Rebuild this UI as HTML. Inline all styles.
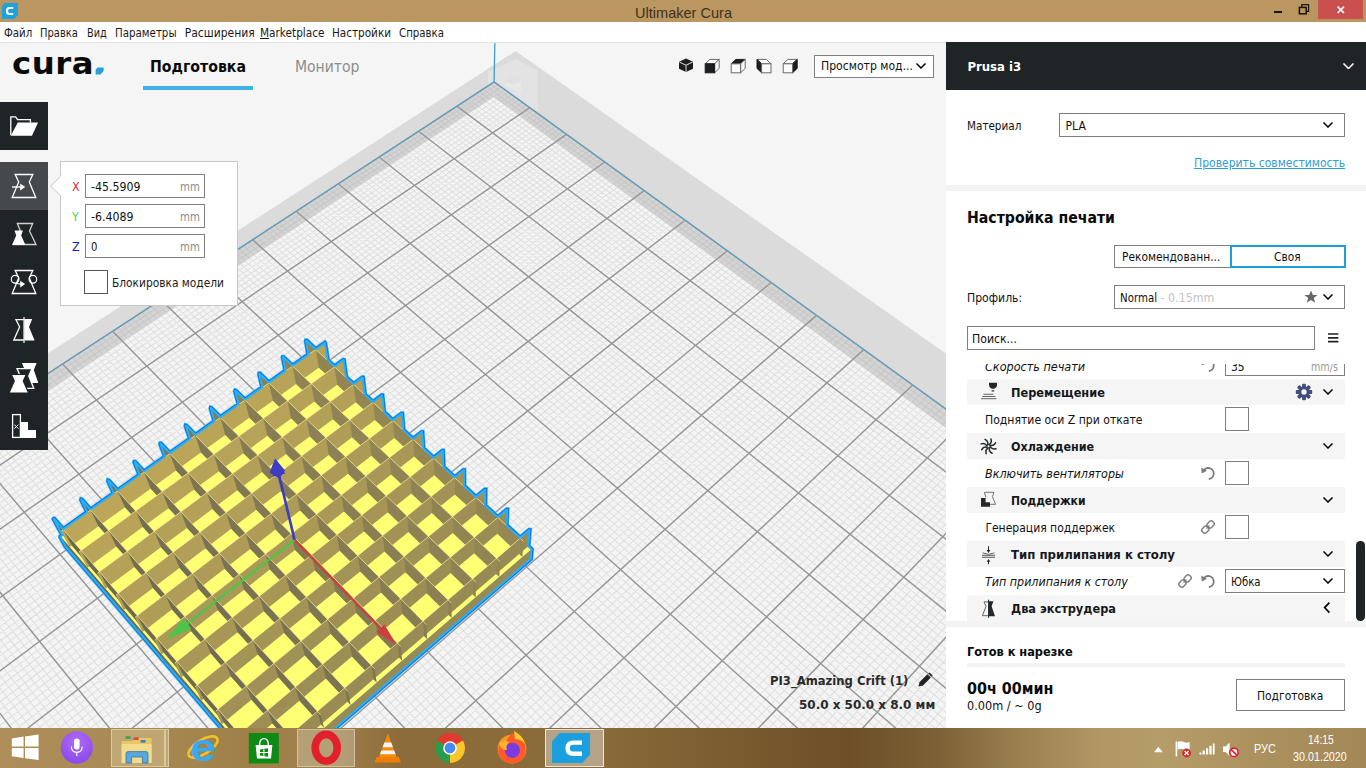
<!DOCTYPE html>
<html lang="ru"><head><meta charset="utf-8"><title>Ultimaker Cura</title>
<style>
html,body{margin:0;padding:0;width:1366px;height:768px;overflow:hidden;background:#f5f5f5;}
body{position:relative;font-family:'DejaVu Sans Condensed','Liberation Sans',sans-serif;}
.scene{position:absolute;left:0;top:0;}
.b{position:absolute;display:block;}
.t{position:absolute;white-space:pre;transform-origin:0 50%;display:block;}

</style></head>
<body>
<svg class="scene" width="1366" height="768" viewBox="0 0 1366 768">
<rect x="0" y="42" width="1366" height="686" fill="#f5f5f5"/>
<polygon points="515.6,51 1605.2,817 408.8,2960 -613.5,781" fill="#dbdbdb"/>
<path d="M488 86V71.5L516 59L537.8 71V112L494.6 82.6Z" fill="#fff" fill-opacity="0.22"/><path d="M505.4 80a7.8 3.6 0 0 1 15.6 0V92L505.4 86Z" fill="#fff" fill-opacity="0.2"/><ellipse cx="513.2" cy="80" rx="7.8" ry="3.6" fill="#d8d8d8" fill-opacity="0.5"/>
<polygon points="494.1,81.9 1530.9,832.7 415.5,2734.5 -558.5,769.9" fill="#f4f4f4"/>
<path d="M497.6 84.5L-555.9 775.1M490.4 84.3L1527.9 837.9M501.1 87L-553.3 780.4M486.7 86.7L1524.8 843.2M504.7 89.6L-550.6 785.8M483.1 89.1L1521.7 848.5M508.2 92.1L-548 791.1M479.4 91.5L1518.6 853.8M511.8 94.7L-545.3 796.5M475.7 94L1515.5 859.1M515.3 97.3L-542.6 801.9M471.9 96.4L1512.3 864.5M518.9 99.9L-539.9 807.3M468.2 98.8L1509.2 869.8M522.5 102.5L-537.2 812.7M464.5 101.3L1506 875.2M526.1 105.1L-534.5 818.2M460.7 103.7L1502.8 880.7M533.4 110.4L-529.1 829.2M453.2 108.7L1496.4 891.6M537 113L-526.3 834.8M449.4 111.1L1493.2 897.1M540.7 115.7L-523.6 840.4M445.6 113.6L1489.9 902.6M544.4 118.3L-520.8 846M441.8 116.1L1486.7 908.2M548 121L-518 851.6M437.9 118.6L1483.4 913.8M551.7 123.7L-515.2 857.2M434.1 121.1L1480.1 919.4M555.4 126.3L-512.4 862.9M430.3 123.6L1476.8 925M559.2 129L-509.5 868.6M426.4 126.1L1473.5 930.7M562.9 131.7L-506.7 874.4M422.5 128.7L1470.1 936.4M570.4 137.2L-501 885.9M414.8 133.8L1463.4 947.8M574.1 139.9L-498.1 891.8M410.8 136.3L1460 953.6M577.9 142.6L-495.2 897.6M406.9 138.9L1456.6 959.4M581.7 145.4L-492.2 903.5M403 141.4L1453.2 965.2M585.5 148.1L-489.3 909.4M399 144L1449.8 971M589.3 150.9L-486.4 915.4M395.1 146.6L1446.4 976.9M593.2 153.7L-483.4 921.3M391.1 149.2L1442.9 982.8M597 156.5L-480.4 927.3M387.1 151.8L1439.4 988.8M600.9 159.2L-477.4 933.4M383.1 154.4L1435.9 994.7M608.6 164.9L-471.4 945.5M375.1 159.7L1428.9 1006.7M612.5 167.7L-468.4 951.6M371.1 162.3L1425.3 1012.8M616.4 170.5L-465.3 957.8M367 165L1421.7 1018.9M620.4 173.4L-462.3 964M363 167.6L1418.2 1025M624.3 176.2L-459.2 970.2M358.9 170.3L1414.6 1031.1M628.2 179.1L-456.1 976.4M354.8 172.9L1410.9 1037.3M632.2 181.9L-453 982.7M350.7 175.6L1407.3 1043.5M636.2 184.8L-449.9 989M346.6 178.3L1403.7 1049.7M640.2 187.7L-446.7 995.4M342.5 181L1400 1056M648.2 193.5L-440.4 1008.1M334.2 186.4L1392.6 1068.6M652.2 196.4L-437.2 1014.6M330 189.2L1388.9 1075M656.3 199.4L-434 1021M325.8 191.9L1385.1 1081.3M660.3 202.3L-430.8 1027.6M321.6 194.6L1381.3 1087.8M664.4 205.3L-427.5 1034.1M317.4 197.4L1377.6 1094.2M668.5 208.2L-424.3 1040.7M313.2 200.1L1373.8 1100.7M672.6 211.2L-421 1047.3M308.9 202.9L1369.9 1107.2M676.7 214.2L-417.7 1053.9M304.7 205.7L1366.1 1113.8M680.9 217.2L-414.4 1060.6M300.4 208.5L1362.2 1120.3M689.2 223.2L-407.7 1074.1M291.9 214.1L1354.4 1133.6M693.3 226.2L-404.3 1080.8M287.6 216.9L1350.5 1140.3M697.5 229.2L-401 1087.7M283.2 219.7L1346.6 1147M701.7 232.3L-397.6 1094.5M278.9 222.6L1342.6 1153.8M706 235.3L-394.1 1101.4M274.6 225.4L1338.6 1160.6M710.2 238.4L-390.7 1108.3M270.2 228.2L1334.6 1167.4M714.4 241.5L-387.2 1115.3M265.8 231.1L1330.6 1174.2M718.7 244.6L-383.8 1122.3M261.4 234L1326.6 1181.1M723 247.7L-380.3 1129.4M257 236.9L1322.5 1188.1M731.6 253.9L-373.2 1143.6M248.1 242.7L1314.3 1202M735.9 257L-369.7 1150.7M243.7 245.6L1310.2 1209.1M740.3 260.2L-366.1 1157.9M239.2 248.5L1306 1216.1M744.6 263.3L-362.5 1165.1M234.7 251.4L1301.9 1223.2M749 266.5L-358.9 1172.4M230.2 254.4L1297.7 1230.4M753.4 269.7L-355.3 1179.7M225.7 257.3L1293.5 1237.6M757.8 272.9L-351.7 1187.1M221.2 260.3L1289.2 1244.8M762.2 276.1L-348 1194.5M216.7 263.2L1285 1252.1M766.6 279.3L-344.3 1201.9M212.1 266.2L1280.7 1259.4M775.6 285.7L-336.9 1216.9M202.9 272.2L1272 1274.1M780.1 289L-333.1 1224.5M198.3 275.2L1267.7 1281.5M784.6 292.2L-329.4 1232.1M193.7 278.2L1263.3 1289M789.1 295.5L-325.6 1239.7M189.1 281.3L1258.9 1296.5M793.6 298.8L-321.8 1247.4M184.4 284.3L1254.5 1304M798.2 302.1L-317.9 1255.2M179.7 287.4L1250 1311.6M802.7 305.4L-314.1 1262.9M175 290.4L1245.6 1319.2M807.3 308.7L-310.2 1270.7M170.3 293.5L1241.1 1326.9M811.9 312.1L-306.3 1278.6M165.6 296.6L1236.6 1334.6M821.2 318.8L-298.4 1294.5M156.1 302.8L1227.4 1350.2M825.8 322.1L-294.5 1302.5M151.4 305.9L1222.8 1358M830.5 325.5L-290.5 1310.5M146.6 309L1218.2 1365.9M835.2 328.9L-286.5 1318.6M141.8 312.2L1213.6 1373.8M839.9 332.3L-282.4 1326.8M137 315.3L1208.9 1381.8M844.6 335.7L-278.4 1335M132.1 318.5L1204.2 1389.8M849.4 339.2L-274.3 1343.2M127.3 321.7L1199.5 1397.8M854.1 342.6L-270.2 1351.5M122.4 324.8L1194.7 1406M858.9 346.1L-266 1359.8M117.5 328L1189.9 1414.1M868.5 353L-257.7 1376.6M107.7 334.5L1180.3 1430.5M873.4 356.5L-253.5 1385.1M102.7 337.7L1175.4 1438.8M878.2 360.1L-249.3 1393.6M97.8 340.9L1170.5 1447.2M883.1 363.6L-245 1402.2M92.8 344.2L1165.6 1455.5M888 367.1L-240.7 1410.8M87.8 347.4L1160.7 1464M892.9 370.7L-236.4 1419.5M82.8 350.7L1155.7 1472.5M897.8 374.2L-232.1 1428.3M77.8 354L1150.7 1481M902.7 377.8L-227.7 1437.1M72.7 357.3L1145.7 1489.6M907.7 381.4L-223.4 1445.9M67.7 360.6L1140.6 1498.2M917.7 388.6L-214.5 1463.7M57.5 367.3L1130.4 1515.6M922.7 392.3L-210.1 1472.7M52.4 370.6L1125.3 1524.4M927.7 395.9L-205.6 1481.8M47.2 374L1120.1 1533.2M932.8 399.6L-201 1490.9M42.1 377.3L1114.9 1542.1M937.9 403.3L-196.5 1500.1M36.9 380.7L1109.6 1551M943 407L-191.9 1509.3M31.7 384.1L1104.4 1560M948.1 410.7L-187.3 1518.6M26.5 387.5L1099.1 1569.1M953.2 414.4L-182.7 1527.9M21.3 391L1093.7 1578.2M958.4 418.1L-178 1537.3M16 394.4L1088.3 1587.3M968.8 425.6L-168.6 1556.3M5.4 401.3L1077.5 1605.8M974 429.4L-163.9 1565.9M0.1 404.8L1072.1 1615.1M979.2 433.2L-159.1 1575.5M-5.2 408.2L1066.6 1624.5M984.5 437L-154.3 1585.2M-10.5 411.7L1061 1633.9M989.8 440.9L-149.4 1595M-15.9 415.2L1055.5 1643.4M995.1 444.7L-144.6 1604.8M-21.3 418.8L1049.9 1652.9M1000.4 448.6L-139.7 1614.7M-26.7 422.3L1044.2 1662.5M1005.8 452.4L-134.7 1624.7M-32.1 425.9L1038.6 1672.2M1011.1 456.3L-129.8 1634.7M-37.6 429.4L1032.9 1681.9M1021.9 464.1L-119.8 1654.9M-48.6 436.6L1021.3 1701.6M1027.4 468.1L-114.7 1665.1M-54.1 440.2L1015.5 1711.5M1032.8 472L-109.6 1675.4M-59.6 443.8L1009.7 1721.4M1038.3 476L-104.5 1685.7M-65.1 447.4L1003.8 1731.5M1043.8 480L-99.3 1696.1M-70.7 451.1L997.9 1741.5M1049.3 484L-94.1 1706.6M-76.3 454.7L991.9 1751.7M1054.9 488L-88.9 1717.2M-81.9 458.4L985.9 1761.9M1060.4 492L-83.6 1727.8M-87.6 462.1L979.9 1772.2M1066 496L-78.3 1738.5M-93.2 465.8L973.8 1782.6M1077.3 504.2L-67.6 1760M-104.6 473.2L961.6 1803.4M1082.9 508.3L-62.2 1771M-110.3 477L955.4 1814M1088.6 512.4L-56.8 1781.9M-116.1 480.7L949.2 1824.6M1094.3 516.5L-51.3 1793M-121.8 484.5L942.9 1835.3M1100 520.7L-45.8 1804.1M-127.6 488.3L936.6 1846.1M1105.8 524.8L-40.2 1815.3M-133.4 492.1L930.2 1856.9M1111.6 529L-34.6 1826.6M-139.3 495.9L923.9 1867.8M1117.4 533.2L-29 1837.9M-145.1 499.7L917.4 1878.7M1123.2 537.4L-23.3 1849.4M-151 503.5L910.9 1889.8M1134.9 545.9L-11.9 1872.5M-162.8 511.3L897.9 1912.1M1140.8 550.2L-6.1 1884.1M-168.8 515.2L891.3 1923.3M1146.7 554.5L-0.3 1895.9M-174.8 519.1L884.6 1934.7M1152.7 558.8L5.6 1907.7M-180.7 523L877.9 1946.1M1158.6 563.1L11.5 1919.7M-186.8 526.9L871.2 1957.6M1164.6 567.5L17.5 1931.7M-192.8 530.9L864.4 1969.1M1170.7 571.8L23.4 1943.7M-198.9 534.8L857.6 1980.8M1176.7 576.2L29.5 1955.9M-205 538.8L850.7 1992.5M1182.8 580.6L35.6 1968.2M-211.1 542.8L843.8 2004.3M1195 589.4L47.8 1993M-223.4 550.8L829.8 2028.1M1201.2 593.9L54 2005.5M-229.6 554.9L822.7 2040.2M1207.3 598.4L60.3 2018.1M-235.8 559L815.6 2052.3M1213.5 602.9L66.6 2030.8M-242 563L808.5 2064.5M1219.8 607.4L72.9 2043.6M-248.3 567.1L801.3 2076.8M1226 611.9L79.3 2056.5M-254.6 571.2L794 2089.2M1232.3 616.5L85.8 2069.5M-260.9 575.4L786.7 2101.7M1238.6 621L92.3 2082.6M-267.2 579.5L779.3 2114.2M1245 625.6L98.8 2095.7M-273.6 583.7L771.9 2126.9M1257.7 634.9L112 2122.4M-286.4 592L756.9 2152.4M1264.2 639.5L118.7 2135.9M-292.8 596.2L749.3 2165.3M1270.6 644.2L125.4 2149.4M-299.3 600.5L741.7 2178.3M1277.1 648.9L132.2 2163.1M-305.8 604.7L734 2191.4M1283.6 653.6L139 2176.9M-312.3 609L726.3 2204.6M1290.1 658.3L145.9 2190.8M-318.8 613.2L718.5 2217.9M1296.7 663.1L152.8 2204.8M-325.4 617.5L710.7 2231.3M1303.3 667.9L159.8 2218.9M-332 621.8L702.7 2244.8M1309.9 672.7L166.9 2233.1M-338.6 626.2L694.8 2258.3M1323.3 682.3L181.1 2261.8M-352 634.9L678.7 2285.8M1330 687.2L188.3 2276.3M-358.7 639.3L670.5 2299.7M1336.7 692.1L195.6 2291M-365.4 643.7L662.3 2313.7M1343.5 697L202.9 2305.7M-372.2 648.1L654.1 2327.7M1350.3 701.9L210.3 2320.6M-379 652.5L645.8 2341.9M1357.1 706.8L217.7 2335.6M-385.8 657L637.4 2356.2M1364 711.8L225.2 2350.7M-392.6 661.5L628.9 2370.6M1370.9 716.8L232.8 2366M-399.5 666L620.4 2385.1M1377.8 721.8L240.4 2381.3M-406.4 670.5L611.8 2399.8M1391.8 731.9L255.8 2412.4M-420.3 679.6L594.5 2429.3M1398.8 737L263.6 2428.1M-427.3 684.1L585.7 2444.3M1405.8 742.1L271.4 2444M-434.3 688.7L576.9 2459.4M1412.9 747.2L279.3 2459.9M-441.4 693.4L568 2474.6M1420.1 752.4L287.3 2476.1M-448.5 698L559 2489.9M1427.2 757.6L295.4 2492.3M-455.6 702.6L549.9 2505.3M1434.4 762.8L303.5 2508.7M-462.7 707.3L540.8 2520.8M1441.6 768L311.7 2525.2M-469.9 712L531.6 2536.5M1448.9 773.3L320 2541.8M-477.1 716.7L522.4 2552.3M1463.5 783.8L336.7 2575.6M-491.6 726.2L503.6 2584.3M1470.8 789.2L345.1 2592.6M-498.9 731L494.1 2600.4M1478.2 794.5L353.7 2609.9M-506.3 735.7L484.6 2616.7M1485.6 799.9L362.3 2627.2M-513.6 740.6L475 2633.1M1493.1 805.3L371 2644.7M-521 745.4L465.2 2649.7M1500.6 810.7L379.7 2662.4M-528.5 750.2L455.4 2666.4M1508.1 816.2L388.5 2680.2M-535.9 755.1L445.6 2683.2M1515.7 821.7L397.4 2698.2M-543.4 760L435.6 2700.2M1523.3 827.2L406.4 2716.3M-550.9 764.9L425.6 2717.3" stroke="#e0e0e1" stroke-width="1.05" fill="none"/>
<path d="M494.1 81.9L-558.5 769.9M494.1 81.9L1530.9 832.7M529.8 107.7L-531.8 823.7M456.9 106.2L1499.6 886.1M566.6 134.4L-503.8 880.2M418.6 131.2L1466.8 942.1M604.7 162L-474.4 939.4M379.1 157L1432.4 1000.7M644.2 190.6L-443.6 1001.7M338.3 183.7L1396.3 1062.3M685 220.2L-411 1067.3M296.2 211.3L1358.3 1127M727.3 250.8L-376.8 1136.4M252.6 239.8L1318.4 1195M771.1 282.5L-340.6 1209.4M207.5 269.2L1276.4 1266.7M816.5 315.4L-302.4 1286.5M160.9 299.7L1232 1342.4M863.7 349.6L-261.9 1368.2M112.6 331.2L1185.1 1422.3M912.7 385L-219 1454.8M62.6 363.9L1135.5 1506.9M963.6 421.9L-173.3 1546.8M10.7 397.8L1082.9 1596.5M1016.5 460.2L-124.8 1644.8M-43.1 433L1027.1 1691.7M1071.6 500.1L-73 1749.2M-98.9 469.5L967.7 1793M1129 541.7L-17.6 1860.9M-156.9 507.4L904.4 1900.9M1188.9 585L41.7 1980.5M-217.2 546.8L836.8 2016.2M1251.3 630.2L105.4 2109M-280 587.8L764.4 2139.6M1316.6 677.5L174 2247.4M-345.3 630.5L686.8 2272M1384.8 726.9L248 2396.8M-413.4 675L603.2 2414.5M1456.2 778.5L328.3 2558.6M-484.4 721.4L513 2568.2M1530.9 832.7L415.5 2734.5M-558.5 769.9L415.5 2734.5" stroke="#949698" stroke-width="1.45" fill="none"/>
<path d="M494.1 81.9 L1530.9 832.7 L415.5 2734.5 L-558.5 769.9ZM-527.9 770.8 L418.6 2630.2 L1498.8 831.7 L493.6 96.8Z" fill="#9a9a9a" fill-opacity="0.36" fill-rule="evenodd"/>
<polygon points="494.1,81.9 1530.9,832.7 415.5,2734.5 -558.5,769.9" fill="none" stroke="#5aa2c6" stroke-width="1.15"/>
<line x1="494.1" y1="81.9" x2="534.4" y2="-2060.1" stroke="#3da0cf" stroke-width="1.3"/>
<g fill="none" stroke-linejoin="miter" stroke-miterlimit="2.6"><path d="M160.9 443.6 L160.5 443.6 L160.4 443.9 L165.1 456.6 L144 471.6 L135 461.9 L134.6 461.9 L134.5 462.2 L139.6 474.7 L117.6 490.4 L108.7 480.6 L108.3 480.5 L108.2 480.9 L113.7 493.2 L90.6 509.6 L81.8 499.6 L81.4 499.5 L81.3 499.9 L87.3 512 L63.2 529.2 L54.3 518.9 L54 518.9 L53.8 519.2 L62.5 535.2 L60.6 536.6 L60.5 536.9 L65.6 546.3 L269.8 784.7 L530.8 558.8 L531.6 549.4 L528.3 546.3 L529.5 530.2 L529.1 530.2 L520.1 537.8 L506.5 525.3 L507.1 509.8 L506.7 509.8 L497.8 517.3 L485.1 505.5 L485.3 489.8 L484.9 489.8 L476 497.1 L464.1 486.1 L463.9 470.2 L463.5 470.2 L454.6 477.3 L443.5 467.1 L442.8 450.9 L442.4 450.9 L433.6 457.9 L423.3 448.4 L422.2 432.1 L421.8 432.1 L413 438.9 L403.4 430.1 L402 413.6 L401.6 413.6 L392.8 420.3 L384 412.1 L382.2 395.4 L381.8 395.4 L373 402 L364.8 394.5 L362.8 377.6 L362.4 377.6 L353.6 384.1 L346.1 377.2 L343.7 360.2 L343.3 360.1 L334.5 366.5 L327.7 360.2 L325 343.2 L324.8 342.9 L315.8 349.2 L306.6 340.7 L306.2 340.7 L306.1 341 L308.4 354.5 L292.6 365.8 L283.4 357.1 L283 357.1 L282.9 357.4 L285.6 370.7 L268.9 382.6 L259.8 373.8 L259.4 373.8 L259.3 374.1 L262.3 387.3 L244.9 399.7 L235.7 390.8 L235.4 390.7 L235.2 391.1 L238.7 404.2 L220.4 417.2 L211.3 408.1 L210.9 408 L210.8 408.4 L214.6 421.3 L195.4 435 L186.3 425.7 L185.9 425.6 L185.8 426 L190.1 438.8 L169.9 453.1Z" stroke="#2aaef3" stroke-width="4.9"/><path d="M160.9 443.6 L160.5 443.6 L160.4 443.9 L165.1 456.6 L144 471.6 L135 461.9 L134.6 461.9 L134.5 462.2 L139.6 474.7 L117.6 490.4 L108.7 480.6 L108.3 480.5 L108.2 480.9 L113.7 493.2 L90.6 509.6 L81.8 499.6 L81.4 499.5 L81.3 499.9 L87.3 512 L63.2 529.2 L54.3 518.9 L54 518.9 L53.8 519.2 L62.5 535.2 L60.6 536.6 L60.5 536.9 L65.6 546.3 L269.8 784.7 L530.8 558.8 L531.6 549.4 L528.3 546.3 L529.5 530.2 L529.1 530.2 L520.1 537.8 L506.5 525.3 L507.1 509.8 L506.7 509.8 L497.8 517.3 L485.1 505.5 L485.3 489.8 L484.9 489.8 L476 497.1 L464.1 486.1 L463.9 470.2 L463.5 470.2 L454.6 477.3 L443.5 467.1 L442.8 450.9 L442.4 450.9 L433.6 457.9 L423.3 448.4 L422.2 432.1 L421.8 432.1 L413 438.9 L403.4 430.1 L402 413.6 L401.6 413.6 L392.8 420.3 L384 412.1 L382.2 395.4 L381.8 395.4 L373 402 L364.8 394.5 L362.8 377.6 L362.4 377.6 L353.6 384.1 L346.1 377.2 L343.7 360.2 L343.3 360.1 L334.5 366.5 L327.7 360.2 L325 343.2 L324.8 342.9 L315.8 349.2 L306.6 340.7 L306.2 340.7 L306.1 341 L308.4 354.5 L292.6 365.8 L283.4 357.1 L283 357.1 L282.9 357.4 L285.6 370.7 L268.9 382.6 L259.8 373.8 L259.4 373.8 L259.3 374.1 L262.3 387.3 L244.9 399.7 L235.7 390.8 L235.4 390.7 L235.2 391.1 L238.7 404.2 L220.4 417.2 L211.3 408.1 L210.9 408 L210.8 408.4 L214.6 421.3 L195.4 435 L186.3 425.7 L185.9 425.6 L185.8 426 L190.1 438.8 L169.9 453.1Z" stroke="#0d68d8" stroke-width="3.4"/><path d="M160.9 443.6 L160.5 443.6 L160.4 443.9 L165.1 456.6 L144 471.6 L135 461.9 L134.6 461.9 L134.5 462.2 L139.6 474.7 L117.6 490.4 L108.7 480.6 L108.3 480.5 L108.2 480.9 L113.7 493.2 L90.6 509.6 L81.8 499.6 L81.4 499.5 L81.3 499.9 L87.3 512 L63.2 529.2 L54.3 518.9 L54 518.9 L53.8 519.2 L62.5 535.2 L60.6 536.6 L60.5 536.9 L65.6 546.3 L269.8 784.7 L530.8 558.8 L531.6 549.4 L528.3 546.3 L529.5 530.2 L529.1 530.2 L520.1 537.8 L506.5 525.3 L507.1 509.8 L506.7 509.8 L497.8 517.3 L485.1 505.5 L485.3 489.8 L484.9 489.8 L476 497.1 L464.1 486.1 L463.9 470.2 L463.5 470.2 L454.6 477.3 L443.5 467.1 L442.8 450.9 L442.4 450.9 L433.6 457.9 L423.3 448.4 L422.2 432.1 L421.8 432.1 L413 438.9 L403.4 430.1 L402 413.6 L401.6 413.6 L392.8 420.3 L384 412.1 L382.2 395.4 L381.8 395.4 L373 402 L364.8 394.5 L362.8 377.6 L362.4 377.6 L353.6 384.1 L346.1 377.2 L343.7 360.2 L343.3 360.1 L334.5 366.5 L327.7 360.2 L325 343.2 L324.8 342.9 L315.8 349.2 L306.6 340.7 L306.2 340.7 L306.1 341 L308.4 354.5 L292.6 365.8 L283.4 357.1 L283 357.1 L282.9 357.4 L285.6 370.7 L268.9 382.6 L259.8 373.8 L259.4 373.8 L259.3 374.1 L262.3 387.3 L244.9 399.7 L235.7 390.8 L235.4 390.7 L235.2 391.1 L238.7 404.2 L220.4 417.2 L211.3 408.1 L210.9 408 L210.8 408.4 L214.6 421.3 L195.4 435 L186.3 425.7 L185.9 425.6 L185.8 426 L190.1 438.8 L169.9 453.1Z" fill="#2aaef3" stroke="#2aaef3" stroke-width="1.5"/></g>
<polygon points="318.3,352.8 531.3,549.5 267.1,777.3 60.8,536.8" fill="#ffff74"/>
<polygon points="530.5,558.7 269.9,784.4 267.1,777.3 531.3,549.5" fill="#988a55"/>
<polygon points="65.9,546.1 269.9,784.4 267.1,777.3 60.8,536.8" fill="#6f6850"/>
<polygon points="309.5,359.1 318.8,367.7 315.8,349.6 306.4,340.9" fill="#928554"/>
<polygon points="286.8,375.3 296,384.1 292.6,366.2 283.2,357.3" fill="#8f8254"/>
<polygon points="263.7,391.8 272.9,400.7 268.9,383 259.6,374" fill="#8b7f53"/>
<polygon points="240.2,408.6 249.3,417.7 244.8,400.1 235.5,391" fill="#887c53"/>
<polygon points="216.2,425.7 225.3,435 220.3,417.6 211.1,408.3" fill="#847a53"/>
<polygon points="191.8,443.2 200.9,452.6 195.4,435.4 186.1,425.9" fill="#817752"/>
<polygon points="167,460.9 176,470.5 169.9,453.5 160.7,443.8" fill="#7d7452"/>
<polygon points="141.7,479 150.7,488.7 144,472 134.8,462.1" fill="#7a7151"/>
<polygon points="115.9,497.4 124.9,507.3 117.5,490.8 108.4,480.8" fill="#766e51"/>
<polygon points="89.6,516.2 98.5,526.3 90.6,510 81.5,499.8" fill="#726b51"/>
<polygon points="62.9,535.3 71.7,545.6 63.1,529.6 54.1,519.1" fill="#6f6850"/>
<polygon points="327.6,361.4 318.8,367.7 315.8,349.6 324.7,343.2" fill="#b8a358"/>
<polygon points="318.8,367.7 296,384.1 292.6,366.2 315.8,349.6" fill="#b8a458"/>
<polygon points="318.8,367.7 337.1,384.8 334.5,366.9 315.8,349.6" fill="#928554"/>
<polygon points="296,384.1 272.9,400.7 268.9,383 292.6,366.2" fill="#b8a458"/>
<polygon points="296,384.1 314.4,401.5 311.2,383.7 292.6,366.2" fill="#8f8254"/>
<polygon points="272.9,400.7 249.3,417.7 244.8,400.1 268.9,383" fill="#b9a458"/>
<polygon points="272.9,400.7 291.2,418.4 287.5,400.9 268.9,383" fill="#8b7f53"/>
<polygon points="249.3,417.7 225.3,435 220.3,417.6 244.8,400.1" fill="#b9a458"/>
<polygon points="249.3,417.7 267.5,435.7 263.4,418.4 244.8,400.1" fill="#887d53"/>
<polygon points="225.3,435 200.9,452.6 195.4,435.4 220.3,417.6" fill="#b9a558"/>
<polygon points="225.3,435 243.5,453.3 238.8,436.2 220.3,417.6" fill="#847a53"/>
<polygon points="200.9,452.6 176,470.5 169.9,453.5 195.4,435.4" fill="#baa559"/>
<polygon points="200.9,452.6 219,471.3 213.8,454.3 195.4,435.4" fill="#817752"/>
<polygon points="176,470.5 150.7,488.7 144,472 169.9,453.5" fill="#baa559"/>
<polygon points="176,470.5 194,489.5 188.2,472.8 169.9,453.5" fill="#7d7452"/>
<polygon points="150.7,488.7 124.9,507.3 117.5,490.8 144,472" fill="#baa559"/>
<polygon points="150.7,488.7 168.6,508.2 162.2,491.6 144,472" fill="#7a7151"/>
<polygon points="124.9,507.3 98.5,526.3 90.6,510 117.5,490.8" fill="#bba659"/>
<polygon points="124.9,507.3 142.7,527.1 135.7,510.9 117.5,490.8" fill="#766e51"/>
<polygon points="98.5,526.3 71.7,545.6 63.1,529.6 90.6,510" fill="#bba659"/>
<polygon points="98.5,526.3 116.3,546.4 108.7,530.4 90.6,510" fill="#736b51"/>
<polygon points="71.7,545.6 69.6,547.1 61,531.1 63.1,529.6" fill="#bba659"/>
<polygon points="71.7,545.6 89.4,566.2 81.1,550.4 63.1,529.6" fill="#6f6850"/>
<polygon points="345.9,378.3 337.1,384.8 334.5,366.9 343.5,360.4" fill="#b5a158"/>
<polygon points="337.1,384.8 314.4,401.5 311.2,383.7 334.5,366.9" fill="#b5a158"/>
<polygon points="337.1,384.8 355.9,402.2 353.5,384.5 334.5,366.9" fill="#938554"/>
<polygon points="314.4,401.5 291.2,418.4 287.5,400.9 311.2,383.7" fill="#b5a158"/>
<polygon points="314.4,401.5 333,419.2 330.2,401.7 311.2,383.7" fill="#8f8354"/>
<polygon points="291.2,418.4 267.5,435.7 263.4,418.4 287.5,400.9" fill="#b6a258"/>
<polygon points="291.2,418.4 309.8,436.5 306.5,419.1 287.5,400.9" fill="#8c8053"/>
<polygon points="267.5,435.7 243.5,453.3 238.8,436.2 263.4,418.4" fill="#b6a258"/>
<polygon points="267.5,435.7 286.1,454.1 282.3,437 263.4,418.4" fill="#887d53"/>
<polygon points="243.5,453.3 219,471.3 213.8,454.3 238.8,436.2" fill="#b6a258"/>
<polygon points="243.5,453.3 262,472.1 257.7,455.1 238.8,436.2" fill="#857a53"/>
<polygon points="219,471.3 194,489.5 188.2,472.8 213.8,454.3" fill="#b7a358"/>
<polygon points="219,471.3 237.4,490.3 232.5,473.6 213.8,454.3" fill="#817752"/>
<polygon points="194,489.5 168.6,508.2 162.2,491.6 188.2,472.8" fill="#b7a358"/>
<polygon points="194,489.5 212.4,509 206.9,492.5 188.2,472.8" fill="#7e7452"/>
<polygon points="168.6,508.2 142.7,527.1 135.7,510.9 162.2,491.6" fill="#b7a358"/>
<polygon points="168.6,508.2 186.9,528 180.9,511.7 162.2,491.6" fill="#7a7152"/>
<polygon points="142.7,527.1 116.3,546.4 108.7,530.4 135.7,510.9" fill="#b8a358"/>
<polygon points="142.7,527.1 160.9,547.3 154.2,531.3 135.7,510.9" fill="#766e51"/>
<polygon points="116.3,546.4 89.4,566.2 81.1,550.4 108.7,530.4" fill="#b8a358"/>
<polygon points="116.3,546.4 134.4,567 127.1,551.3 108.7,530.4" fill="#736b51"/>
<polygon points="89.4,566.2 87.3,567.7 78.9,552 81.1,550.4" fill="#b8a458"/>
<polygon points="89.4,566.2 107.4,587.1 99.4,571.7 81.1,550.4" fill="#6f6850"/>
<polygon points="364.7,395.6 355.9,402.2 353.5,384.5 362.6,377.8" fill="#b29e58"/>
<polygon points="355.9,402.2 333,419.2 330.2,401.7 353.5,384.5" fill="#b29f58"/>
<polygon points="355.9,402.2 374.9,420 373,402.4 353.5,384.5" fill="#938654"/>
<polygon points="333,419.2 309.8,436.5 306.5,419.1 330.2,401.7" fill="#b29f58"/>
<polygon points="333,419.2 352.1,437.3 349.6,419.9 330.2,401.7" fill="#908354"/>
<polygon points="309.8,436.5 286.1,454.1 282.3,437 306.5,419.1" fill="#b39f58"/>
<polygon points="309.8,436.5 328.8,454.9 325.8,437.8 306.5,419.1" fill="#8c8054"/>
<polygon points="286.1,454.1 262,472.1 257.7,455.1 282.3,437" fill="#b3a058"/>
<polygon points="286.1,454.1 305,472.9 301.6,455.9 282.3,437" fill="#897d53"/>
<polygon points="262,472.1 237.4,490.3 232.5,473.6 257.7,455.1" fill="#b3a058"/>
<polygon points="262,472.1 280.9,491.2 276.9,474.4 257.7,455.1" fill="#857a53"/>
<polygon points="237.4,490.3 212.4,509 206.9,492.5 232.5,473.6" fill="#b4a058"/>
<polygon points="237.4,490.3 256.2,509.8 251.7,493.3 232.5,473.6" fill="#827752"/>
<polygon points="212.4,509 186.9,528 180.9,511.7 206.9,492.5" fill="#b4a058"/>
<polygon points="212.4,509 231.2,528.8 226,512.6 206.9,492.5" fill="#7e7552"/>
<polygon points="186.9,528 160.9,547.3 154.2,531.3 180.9,511.7" fill="#b4a158"/>
<polygon points="186.9,528 205.6,548.2 199.9,532.2 180.9,511.7" fill="#7a7252"/>
<polygon points="160.9,547.3 134.4,567 127.1,551.3 154.2,531.3" fill="#b5a158"/>
<polygon points="160.9,547.3 179.5,567.9 173.2,552.2 154.2,531.3" fill="#776f51"/>
<polygon points="134.4,567 107.4,587.1 99.4,571.7 127.1,551.3" fill="#b5a158"/>
<polygon points="134.4,567 152.9,588 145.9,572.6 127.1,551.3" fill="#736c51"/>
<polygon points="107.4,587.1 105.3,588.7 97.3,573.3 99.4,571.7" fill="#b5a158"/>
<polygon points="107.4,587.1 125.8,608.5 118.1,593.4 99.4,571.7" fill="#6f6950"/>
<polygon points="383.8,413.3 374.9,420 373,402.4 382,395.6" fill="#af9c57"/>
<polygon points="374.9,420 352.1,437.3 349.6,419.9 373,402.4" fill="#af9c57"/>
<polygon points="374.9,420 394.4,438 392.8,420.7 373,402.4" fill="#938654"/>
<polygon points="352.1,437.3 328.8,454.9 325.8,437.8 349.6,419.9" fill="#af9d57"/>
<polygon points="352.1,437.3 371.4,455.7 369.4,438.5 349.6,419.9" fill="#908354"/>
<polygon points="328.8,454.9 305,472.9 301.6,455.9 325.8,437.8" fill="#b09d57"/>
<polygon points="328.8,454.9 348.1,473.7 345.5,456.7 325.8,437.8" fill="#8d8054"/>
<polygon points="305,472.9 280.9,491.2 276.9,474.4 301.6,455.9" fill="#b09d57"/>
<polygon points="305,472.9 324.3,492 321.3,475.3 301.6,455.9" fill="#897e53"/>
<polygon points="280.9,491.2 256.2,509.8 251.7,493.3 276.9,474.4" fill="#b09d57"/>
<polygon points="280.9,491.2 300.1,510.6 296.5,494.1 276.9,474.4" fill="#857b53"/>
<polygon points="256.2,509.8 231.2,528.8 226,512.6 251.7,493.3" fill="#b19e58"/>
<polygon points="256.2,509.8 275.4,529.6 271.2,513.4 251.7,493.3" fill="#827852"/>
<polygon points="231.2,528.8 205.6,548.2 199.9,532.2 226,512.6" fill="#b19e58"/>
<polygon points="231.2,528.8 250.3,549 245.5,533 226,512.6" fill="#7e7552"/>
<polygon points="205.6,548.2 179.5,567.9 173.2,552.2 199.9,532.2" fill="#b19e58"/>
<polygon points="205.6,548.2 224.6,568.8 219.3,553.1 199.9,532.2" fill="#7b7252"/>
<polygon points="179.5,567.9 152.9,588 145.9,572.6 173.2,552.2" fill="#b19e58"/>
<polygon points="179.5,567.9 198.5,588.9 192.5,573.5 173.2,552.2" fill="#776f51"/>
<polygon points="152.9,588 125.8,608.5 118.1,593.4 145.9,572.6" fill="#b29e58"/>
<polygon points="152.9,588 171.8,609.4 165.2,594.3 145.9,572.6" fill="#736c51"/>
<polygon points="125.8,608.5 123.7,610.1 116,595 118.1,593.4" fill="#b29f58"/>
<polygon points="125.8,608.5 144.6,630.4 137.3,615.6 118.1,593.4" fill="#6f6950"/>
<polygon points="403.2,431.2 394.4,438 392.8,420.7 401.8,413.8" fill="#ac9957"/>
<polygon points="394.4,438 371.4,455.7 369.4,438.5 392.8,420.7" fill="#ac9a57"/>
<polygon points="394.4,438 414.2,456.5 413,439.3 392.8,420.7" fill="#948654"/>
<polygon points="371.4,455.7 348.1,473.7 345.5,456.7 369.4,438.5" fill="#ac9a57"/>
<polygon points="371.4,455.7 391.2,474.4 389.5,457.5 369.4,438.5" fill="#908354"/>
<polygon points="348.1,473.7 324.3,492 321.3,475.3 345.5,456.7" fill="#ad9a57"/>
<polygon points="348.1,473.7 367.8,492.8 365.7,476.1 345.5,456.7" fill="#8d8154"/>
<polygon points="324.3,492 300.1,510.6 296.5,494.1 321.3,475.3" fill="#ad9b57"/>
<polygon points="324.3,492 344,511.4 341.3,495 321.3,475.3" fill="#897e53"/>
<polygon points="300.1,510.6 275.4,529.6 271.2,513.4 296.5,494.1" fill="#ad9b57"/>
<polygon points="300.1,510.6 319.7,530.5 316.5,514.2 296.5,494.1" fill="#867b53"/>
<polygon points="275.4,529.6 250.3,549 245.5,533 271.2,513.4" fill="#ad9b57"/>
<polygon points="275.4,529.6 295,549.9 291.2,533.9 271.2,513.4" fill="#827852"/>
<polygon points="250.3,549 224.6,568.8 219.3,553.1 245.5,533" fill="#ae9b57"/>
<polygon points="250.3,549 269.8,569.6 265.4,553.9 245.5,533" fill="#7f7552"/>
<polygon points="224.6,568.8 198.5,588.9 192.5,573.5 219.3,553.1" fill="#ae9b57"/>
<polygon points="224.6,568.8 244.1,589.8 239.1,574.4 219.3,553.1" fill="#7b7252"/>
<polygon points="198.5,588.9 171.8,609.4 165.2,594.3 192.5,573.5" fill="#ae9c57"/>
<polygon points="198.5,588.9 217.8,610.3 212.2,595.2 192.5,573.5" fill="#776f51"/>
<polygon points="171.8,609.4 144.6,630.4 137.3,615.6 165.2,594.3" fill="#ae9c57"/>
<polygon points="171.8,609.4 191.1,631.3 184.8,616.5 165.2,594.3" fill="#736c51"/>
<polygon points="144.6,630.4 142.5,632 135.1,617.3 137.3,615.6" fill="#af9c57"/>
<polygon points="144.6,630.4 163.8,652.7 156.8,638.3 137.3,615.6" fill="#706950"/>
<polygon points="423,449.5 414.2,456.5 413,439.3 422,432.3" fill="#a89757"/>
<polygon points="414.2,456.5 391.2,474.4 389.5,457.5 413,439.3" fill="#a99757"/>
<polygon points="414.2,456.5 434.3,475.2 433.6,458.3 413,439.3" fill="#948754"/>
<polygon points="391.2,474.4 367.8,492.8 365.7,476.1 389.5,457.5" fill="#a99757"/>
<polygon points="391.2,474.4 411.4,493.6 410.1,476.9 389.5,457.5" fill="#918454"/>
<polygon points="367.8,492.8 344,511.4 341.3,495 365.7,476.1" fill="#a99857"/>
<polygon points="367.8,492.8 387.9,512.3 386.2,495.8 365.7,476.1" fill="#8d8154"/>
<polygon points="344,511.4 319.7,530.5 316.5,514.2 341.3,495" fill="#aa9857"/>
<polygon points="344,511.4 364.1,531.3 361.8,515.1 341.3,495" fill="#8a7e53"/>
<polygon points="319.7,530.5 295,549.9 291.2,533.9 316.5,514.2" fill="#aa9857"/>
<polygon points="319.7,530.5 339.7,550.7 336.9,534.8 316.5,514.2" fill="#867b53"/>
<polygon points="295,549.9 269.8,569.6 265.4,553.9 291.2,533.9" fill="#aa9857"/>
<polygon points="295,549.9 315,570.5 311.5,554.8 291.2,533.9" fill="#827852"/>
<polygon points="269.8,569.6 244.1,589.8 239.1,574.4 265.4,553.9" fill="#ab9957"/>
<polygon points="269.8,569.6 289.7,590.7 285.7,575.3 265.4,553.9" fill="#7f7552"/>
<polygon points="244.1,589.8 217.8,610.3 212.2,595.2 239.1,574.4" fill="#ab9957"/>
<polygon points="244.1,589.8 263.9,611.2 259.3,596.2 239.1,574.4" fill="#7b7252"/>
<polygon points="217.8,610.3 191.1,631.3 184.8,616.5 212.2,595.2" fill="#ab9957"/>
<polygon points="217.8,610.3 237.6,632.2 232.3,617.5 212.2,595.2" fill="#776f51"/>
<polygon points="191.1,631.3 163.8,652.7 156.8,638.3 184.8,616.5" fill="#ab9957"/>
<polygon points="191.1,631.3 210.8,653.6 204.8,639.2 184.8,616.5" fill="#746c51"/>
<polygon points="163.8,652.7 161.6,654.4 154.6,640 156.8,638.3" fill="#ab9957"/>
<polygon points="163.8,652.7 183.4,675.5 176.8,661.4 156.8,638.3" fill="#706950"/>
<polygon points="443.2,468.2 434.3,475.2 433.6,458.3 442.6,451.2" fill="#a59456"/>
<polygon points="434.3,475.2 411.4,493.6 410.1,476.9 433.6,458.3" fill="#a59556"/>
<polygon points="434.3,475.2 454.9,494.4 454.6,477.7 433.6,458.3" fill="#958754"/>
<polygon points="411.4,493.6 387.9,512.3 386.2,495.8 410.1,476.9" fill="#a69556"/>
<polygon points="411.4,493.6 431.9,513.1 431.1,496.6 410.1,476.9" fill="#918454"/>
<polygon points="387.9,512.3 364.1,531.3 361.8,515.1 386.2,495.8" fill="#a69556"/>
<polygon points="387.9,512.3 408.4,532.1 407.1,515.9 386.2,495.8" fill="#8e8154"/>
<polygon points="364.1,531.3 339.7,550.7 336.9,534.8 361.8,515.1" fill="#a69556"/>
<polygon points="364.1,531.3 384.5,551.6 382.7,535.6 361.8,515.1" fill="#8a7e53"/>
<polygon points="339.7,550.7 315,570.5 311.5,554.8 336.9,534.8" fill="#a79656"/>
<polygon points="339.7,550.7 360.2,571.4 357.7,555.7 336.9,534.8" fill="#867b53"/>
<polygon points="315,570.5 289.7,590.7 285.7,575.3 311.5,554.8" fill="#a79656"/>
<polygon points="315,570.5 335.3,591.6 332.3,576.2 311.5,554.8" fill="#837852"/>
<polygon points="289.7,590.7 263.9,611.2 259.3,596.2 285.7,575.3" fill="#a79656"/>
<polygon points="289.7,590.7 310,612.1 306.4,597.1 285.7,575.3" fill="#7f7552"/>
<polygon points="263.9,611.2 237.6,632.2 232.3,617.5 259.3,596.2" fill="#a89657"/>
<polygon points="263.9,611.2 284.1,633.1 279.9,618.4 259.3,596.2" fill="#7b7252"/>
<polygon points="237.6,632.2 210.8,653.6 204.8,639.2 232.3,617.5" fill="#a89657"/>
<polygon points="237.6,632.2 257.8,654.6 252.9,640.2 232.3,617.5" fill="#786f51"/>
<polygon points="210.8,653.6 183.4,675.5 176.8,661.4 204.8,639.2" fill="#a89757"/>
<polygon points="210.8,653.6 230.8,676.4 225.3,662.4 204.8,639.2" fill="#746c51"/>
<polygon points="183.4,675.5 181.2,677.2 174.6,663.1 176.8,661.4" fill="#a89757"/>
<polygon points="183.4,675.5 203.4,698.8 197.2,685.1 176.8,661.4" fill="#706950"/>
<polygon points="463.8,487.2 454.9,494.4 454.6,477.7 463.6,470.4" fill="#a29256"/>
<polygon points="454.9,494.4 431.9,513.1 431.1,496.6 454.6,477.7" fill="#a29256"/>
<polygon points="454.9,494.4 475.9,513.9 476,497.5 454.6,477.7" fill="#958754"/>
<polygon points="431.9,513.1 408.4,532.1 407.1,515.9 431.1,496.6" fill="#a29256"/>
<polygon points="431.9,513.1 452.8,533 452.5,516.8 431.1,496.6" fill="#918454"/>
<polygon points="408.4,532.1 384.5,551.6 382.7,535.6 407.1,515.9" fill="#a39256"/>
<polygon points="408.4,532.1 429.4,552.4 428.5,536.5 407.1,515.9" fill="#8e8154"/>
<polygon points="384.5,551.6 360.2,571.4 357.7,555.7 382.7,535.6" fill="#a39356"/>
<polygon points="384.5,551.6 405.4,572.2 404,556.6 382.7,535.6" fill="#8a7f53"/>
<polygon points="360.2,571.4 335.3,591.6 332.3,576.2 357.7,555.7" fill="#a39356"/>
<polygon points="360.2,571.4 381,592.4 379,577.1 357.7,555.7" fill="#877c53"/>
<polygon points="335.3,591.6 310,612.1 306.4,597.1 332.3,576.2" fill="#a49356"/>
<polygon points="335.3,591.6 356.1,613 353.5,598 332.3,576.2" fill="#837952"/>
<polygon points="310,612.1 284.1,633.1 279.9,618.4 306.4,597.1" fill="#a49356"/>
<polygon points="310,612.1 330.7,634.1 327.5,619.3 306.4,597.1" fill="#7f7652"/>
<polygon points="284.1,633.1 257.8,654.6 252.9,640.2 279.9,618.4" fill="#a49456"/>
<polygon points="284.1,633.1 304.8,655.5 301,641.1 279.9,618.4" fill="#7c7352"/>
<polygon points="257.8,654.6 230.8,676.4 225.3,662.4 252.9,640.2" fill="#a49456"/>
<polygon points="257.8,654.6 278.4,677.4 273.9,663.3 252.9,640.2" fill="#787051"/>
<polygon points="230.8,676.4 203.4,698.8 197.2,685.1 225.3,662.4" fill="#a59456"/>
<polygon points="230.8,676.4 251.4,699.7 246.3,686.1 225.3,662.4" fill="#746d51"/>
<polygon points="203.4,698.8 201.2,700.5 195,686.8 197.2,685.1" fill="#a59456"/>
<polygon points="203.4,698.8 223.8,722.5 218,709.2 197.2,685.1" fill="#706950"/>
<polygon points="484.8,506.5 475.9,513.9 476,497.5 485.1,490" fill="#9f8f56"/>
<polygon points="475.9,513.9 452.8,533 452.5,516.8 476,497.5" fill="#9f8f56"/>
<polygon points="475.9,513.9 497.3,533.8 497.8,517.7 476,497.5" fill="#958754"/>
<polygon points="452.8,533 429.4,552.4 428.5,536.5 452.5,516.8" fill="#9f8f56"/>
<polygon points="452.8,533 474.2,553.3 474.3,537.4 452.5,516.8" fill="#928554"/>
<polygon points="429.4,552.4 405.4,572.2 404,556.6 428.5,536.5" fill="#9f9056"/>
<polygon points="429.4,552.4 450.7,573.1 450.3,557.5 428.5,536.5" fill="#8e8254"/>
<polygon points="405.4,572.2 381,592.4 379,577.1 404,556.6" fill="#a09056"/>
<polygon points="405.4,572.2 426.7,593.3 425.7,578 404,556.6" fill="#8b7f53"/>
<polygon points="381,592.4 356.1,613 353.5,598 379,577.1" fill="#a09056"/>
<polygon points="381,592.4 402.3,614 400.7,598.9 379,577.1" fill="#877c53"/>
<polygon points="356.1,613 330.7,634.1 327.5,619.3 353.5,598" fill="#a09056"/>
<polygon points="356.1,613 377.3,635 375.2,620.3 353.5,598" fill="#837953"/>
<polygon points="330.7,634.1 304.8,655.5 301,641.1 327.5,619.3" fill="#a19156"/>
<polygon points="330.7,634.1 351.9,656.5 349.2,642.1 327.5,619.3" fill="#807652"/>
<polygon points="304.8,655.5 278.4,677.4 273.9,663.3 301,641.1" fill="#a19156"/>
<polygon points="304.8,655.5 325.9,678.4 322.6,664.3 301,641.1" fill="#7c7352"/>
<polygon points="278.4,677.4 251.4,699.7 246.3,686.1 273.9,663.3" fill="#a19156"/>
<polygon points="278.4,677.4 299.4,700.7 295.4,687 273.9,663.3" fill="#787051"/>
<polygon points="251.4,699.7 223.8,722.5 218,709.2 246.3,686.1" fill="#a19156"/>
<polygon points="251.4,699.7 272.3,723.5 267.7,710.3 246.3,686.1" fill="#746d51"/>
<polygon points="223.8,722.5 221.7,724.3 215.8,711.1 218,709.2" fill="#a19156"/>
<polygon points="223.8,722.5 244.7,746.8 239.3,734 218,709.2" fill="#706a50"/>
<polygon points="506.2,526.3 497.3,533.8 497.8,517.7 506.9,510" fill="#9b8c55"/>
<polygon points="497.3,533.8 474.2,553.3 474.3,537.4 497.8,517.7" fill="#9b8c55"/>
<polygon points="497.3,533.8 519.1,554.1 520.1,538.2 497.8,517.7" fill="#968855"/>
<polygon points="474.2,553.3 450.7,573.1 450.3,557.5 474.3,537.4" fill="#9c8d55"/>
<polygon points="474.2,553.3 496,574 496.6,558.4 474.3,537.4" fill="#928554"/>
<polygon points="450.7,573.1 426.7,593.3 425.7,578 450.3,557.5" fill="#9c8d55"/>
<polygon points="450.7,573.1 472.5,594.2 472.5,578.9 450.3,557.5" fill="#8e8254"/>
<polygon points="426.7,593.3 402.3,614 400.7,598.9 425.7,578" fill="#9c8d55"/>
<polygon points="426.7,593.3 448.5,614.9 448,599.8 425.7,578" fill="#8b7f53"/>
<polygon points="402.3,614 377.3,635 375.2,620.3 400.7,598.9" fill="#9d8d55"/>
<polygon points="402.3,614 424,635.9 422.9,621.2 400.7,598.9" fill="#877c53"/>
<polygon points="377.3,635 351.9,656.5 349.2,642.1 375.2,620.3" fill="#9d8e55"/>
<polygon points="377.3,635 399,657.4 397.3,643 375.2,620.3" fill="#847953"/>
<polygon points="351.9,656.5 325.9,678.4 322.6,664.3 349.2,642.1" fill="#9d8e55"/>
<polygon points="351.9,656.5 373.5,679.3 371.2,665.3 349.2,642.1" fill="#807652"/>
<polygon points="325.9,678.4 299.4,700.7 295.4,687 322.6,664.3" fill="#9d8e55"/>
<polygon points="325.9,678.4 347.5,701.7 344.6,688 322.6,664.3" fill="#7c7352"/>
<polygon points="299.4,700.7 272.3,723.5 267.7,710.3 295.4,687" fill="#9e8e55"/>
<polygon points="299.4,700.7 320.9,724.5 317.4,711.3 295.4,687" fill="#787051"/>
<polygon points="272.3,723.5 244.7,746.8 239.3,734 267.7,710.3" fill="#9e8e55"/>
<polygon points="272.3,723.5 293.8,747.9 289.6,735 267.7,710.3" fill="#746d51"/>
<polygon points="244.7,746.8 242.5,748.7 237.1,735.8 239.3,734" fill="#9e8e55"/>
<polygon points="244.7,746.8 266.1,771.7 261.1,759.3 239.3,734" fill="#716a50"/>
<polygon points="528,546.5 519.1,554.1 520.1,538.2 529.2,530.5" fill="#988a55"/>
<polygon points="519.1,554.1 496,574 496.6,558.4 520.1,538.2" fill="#988a55"/>
<polygon points="519.1,554.1 522.4,557.1 523.5,541.3 520.1,538.2" fill="#968855"/>
<polygon points="496,574 472.5,594.2 472.5,578.9 496.6,558.4" fill="#988a55"/>
<polygon points="496,574 499.3,577.1 499.9,561.5 496.6,558.4" fill="#928554"/>
<polygon points="472.5,594.2 448.5,614.9 448,599.8 472.5,578.9" fill="#998a55"/>
<polygon points="472.5,594.2 475.7,597.4 475.8,582.1 472.5,578.9" fill="#8f8254"/>
<polygon points="448.5,614.9 424,635.9 422.9,621.2 448,599.8" fill="#998a55"/>
<polygon points="448.5,614.9 451.7,618.1 451.3,603.1 448,599.8" fill="#8b7f53"/>
<polygon points="424,635.9 399,657.4 397.3,643 422.9,621.2" fill="#998b55"/>
<polygon points="424,635.9 427.2,639.2 426.2,624.5 422.9,621.2" fill="#877c53"/>
<polygon points="399,657.4 373.5,679.3 371.2,665.3 397.3,643" fill="#998b55"/>
<polygon points="399,657.4 402.2,660.7 400.6,646.4 397.3,643" fill="#847953"/>
<polygon points="373.5,679.3 347.5,701.7 344.6,688 371.2,665.3" fill="#9a8b55"/>
<polygon points="373.5,679.3 376.7,682.7 374.5,668.8 371.2,665.3" fill="#807652"/>
<polygon points="347.5,701.7 320.9,724.5 317.4,711.3 344.6,688" fill="#9a8b55"/>
<polygon points="347.5,701.7 350.7,705.2 347.9,691.6 344.6,688" fill="#7c7352"/>
<polygon points="320.9,724.5 293.8,747.9 289.6,735 317.4,711.3" fill="#9a8b55"/>
<polygon points="320.9,724.5 324.1,728.1 320.6,714.9 317.4,711.3" fill="#787051"/>
<polygon points="293.8,747.9 266.1,771.7 261.1,759.3 289.6,735" fill="#9a8c55"/>
<polygon points="293.8,747.9 297,751.5 292.8,738.7 289.6,735" fill="#756d51"/>
<polygon points="266.1,771.7 263.9,773.5 258.9,761.2 261.1,759.3" fill="#9a8c55"/>
<polygon points="266.1,771.7 269.2,775.4 264.4,763 261.1,759.3" fill="#716a50"/>
<path d="M324.7 343.2L61 531.1M343.5 360.4L78.9 552M362.6 377.8L97.3 573.3M382 395.6L116 595M401.8 413.8L135.1 617.3M422 432.3L154.6 640M442.6 451.2L174.6 663.1M463.6 470.4L195 686.8M485.1 490L215.8 711.1M506.9 510L237.1 735.8M529.2 530.5L258.9 761.2M306.4 340.9L523.5 541.3M283.2 357.3L499.9 561.5M259.6 374L475.8 582.1M235.5 391L451.3 603.1M211.1 408.3L426.2 624.5M186.1 425.9L400.6 646.4M160.7 443.8L374.5 668.8M134.8 462.1L347.9 691.6M108.4 480.8L320.6 714.9M81.5 499.8L292.8 738.7M54.1 519.1L264.4 763" stroke="#fff59a" stroke-width="0.8" fill="none" opacity="0.85"/>
<path d="M160.9 443.6 L160.5 443.6 L160.4 443.9 L165.1 456.6 L144 471.6 L135 461.9 L134.6 461.9 L134.5 462.2 L139.6 474.7 L117.6 490.4 L108.7 480.6 L108.3 480.5 L108.2 480.9 L113.7 493.2 L90.6 509.6 L81.8 499.6 L81.4 499.5 L81.3 499.9 L87.3 512 L63.2 529.2 L54.3 518.9 L54 518.9 L53.8 519.2 L62.5 535.2 L60.6 536.6 L60.5 536.9 L65.6 546.3 L269.8 784.7 L530.8 558.8 L531.6 549.4 L528.3 546.3 L529.5 530.2 L529.1 530.2 L520.1 537.8 L506.5 525.3 L507.1 509.8 L506.7 509.8 L497.8 517.3 L485.1 505.5 L485.3 489.8 L484.9 489.8 L476 497.1 L464.1 486.1 L463.9 470.2 L463.5 470.2 L454.6 477.3 L443.5 467.1 L442.8 450.9 L442.4 450.9 L433.6 457.9 L423.3 448.4 L422.2 432.1 L421.8 432.1 L413 438.9 L403.4 430.1 L402 413.6 L401.6 413.6 L392.8 420.3 L384 412.1 L382.2 395.4 L381.8 395.4 L373 402 L364.8 394.5 L362.8 377.6 L362.4 377.6 L353.6 384.1 L346.1 377.2 L343.7 360.2 L343.3 360.1 L334.5 366.5 L327.7 360.2 L325 343.2 L324.8 342.9 L315.8 349.2 L306.6 340.7 L306.2 340.7 L306.1 341 L308.4 354.5 L292.6 365.8 L283.4 357.1 L283 357.1 L282.9 357.4 L285.6 370.7 L268.9 382.6 L259.8 373.8 L259.4 373.8 L259.3 374.1 L262.3 387.3 L244.9 399.7 L235.7 390.8 L235.4 390.7 L235.2 391.1 L238.7 404.2 L220.4 417.2 L211.3 408.1 L210.9 408 L210.8 408.4 L214.6 421.3 L195.4 435 L186.3 425.7 L185.9 425.6 L185.8 426 L190.1 438.8 L169.9 453.1Z" fill="none" stroke="#2aaef3" stroke-width="1.9" stroke-linejoin="round"/>
<line x1="294.6" y1="539.9" x2="380.4" y2="628.2" stroke="#cb403a" stroke-width="2.2"/>
<polygon points="396.8,645 376.5,632 384.4,624.4" fill="#cb403a"/>
<line x1="294.6" y1="539.9" x2="187.1" y2="623.7" stroke="#4fc548" stroke-width="2.2"/>
<polygon points="166.6,639.6 183.1,618.5 191.1,628.8" fill="#4fc548"/>
<line x1="294.6" y1="539.9" x2="279" y2="474.9" stroke="#3c3cc4" stroke-width="2.6"/>
<polygon points="275.1,458.6 285.3,473.4 272.7,476.4" fill="#3c3cc4"/>
<path d="M275.1 458.6L269.6 472.6L279.4 478.6L285 470.6Z" fill="#3c3cc4"/>
</svg>
<div class="b" style="left:0px;top:0px;width:1366px;height:22.6px;background:#ba9761;"></div>
<div class="b" style="left:0px;top:22px;width:1366px;height:20px;background:#fff;"></div>
<div class="b" style="left:0px;top:42px;width:1366px;height:1px;background:#e4e4e4;"></div>
<svg class="b" style="left:2px;top:3px;" width="16" height="16" viewBox="0 0 16 16"><path d="M3 0H16V12L12 16H0V3Z" fill="#1da1e0"/><path d="M11.2 5H7.3Q5 5 5 8Q5 11 7.3 11H11.2" fill="none" stroke="#fff" stroke-width="2.2"/></svg>
<span class="t" style="left:634.6px;top:4.51px;font-size:15px;line-height:15px;transform:scaleX(0.9697);color:#3f3019;font-family:'Liberation Sans',sans-serif;">Ultimaker Cura</span>
<div class="b" style="left:1274px;top:11px;width:8px;height:2px;background:#1b1208;"></div>
<svg class="b" style="left:1298px;top:3px;" width="12" height="12" viewBox="0 0 12 12"><path d="M3.8 4V1.6H10.6V8.4H8.4" fill="none" stroke="#1b1208" stroke-width="1.2"/><rect x="1.4" y="4.4" width="6.8" height="6.4" fill="none" stroke="#1b1208" stroke-width="1.5"/></svg>
<div class="b" style="left:1318px;top:0px;width:45px;height:19px;background:#c9504f;"></div>
<svg class="b" style="left:1336px;top:5px;" width="10" height="10" viewBox="0 0 10 10"><path d="M1.6 1.6L8 8M8 1.6L1.6 8" stroke="#fff" stroke-width="1.7"/></svg>
<span class="t" style="left:3.7px;top:27.05px;font-size:12px;line-height:12px;transform:scaleX(0.9488);color:#1a1a1a;">Файл</span>
<span class="t" style="left:40.4px;top:27.05px;font-size:12px;line-height:12px;transform:scaleX(0.9223);color:#1a1a1a;">Правка</span>
<span class="t" style="left:86.7px;top:27.05px;font-size:12px;line-height:12px;transform:scaleX(0.8999);color:#1a1a1a;">Вид</span>
<span class="t" style="left:114.5px;top:27.05px;font-size:12px;line-height:12px;transform:scaleX(0.9510);color:#1a1a1a;">Параметры</span>
<span class="t" style="left:184.7px;top:27.05px;font-size:12px;line-height:12px;color:#1a1a1a;">Расширения</span>
<span class="t" style="left:260.3px;top:27.05px;font-size:12px;line-height:12px;transform:scaleX(0.9752);color:#1a1a1a;"><u>M</u>arketplace</span>
<span class="t" style="left:332.3px;top:27.05px;font-size:12px;line-height:12px;transform:scaleX(0.9677);color:#1a1a1a;">Настройки</span>
<span class="t" style="left:399.3px;top:27.05px;font-size:12px;line-height:12px;transform:scaleX(0.9458);color:#1a1a1a;">Справка</span>
<span class="t" style="left:11.7px;top:48.47px;font-size:31px;line-height:31px;font-weight:bold;transform:scaleX(1.0425);color:#0a0a0a;font-family:'DejaVu Sans','Liberation Sans',sans-serif;letter-spacing:0.5px;">cura</span>
<svg class="b" style="left:95px;top:66px;" width="10" height="10" viewBox="0 0 10 10"><path d="M2.6 1.4H8.6V5L5.6 8.6H0.6V3.8Z" fill="#2a9fd8"/></svg>
<span class="t" style="left:150px;top:59.16px;font-size:16px;line-height:16px;font-weight:bold;transform:scaleX(0.9815);color:#0a0a0a;">Подготовка</span>
<div class="b" style="left:143px;top:86px;width:110px;height:3.6px;background:#41b1e6;"></div>
<span class="t" style="left:295.2px;top:59.16px;font-size:16px;line-height:16px;transform:scaleX(0.9709);color:#8c8c8c;">Монитор</span>
<svg class="b" style="left:0px;top:0px;pointer-events:none;" width="1366" height="100" viewBox="0 0 1366 100"><g transform="translate(679,58.5)"><path d="M7 0L14 3.3V10.2L7 13.6L0 10.2V3.3Z" fill="#1b1d1f"/><path d="M7 13.6V6.8L0.4 3.6M7 6.8L13.6 3.6" fill="none" stroke="#c8c8c8" stroke-width="1.1"/></g><path d="M705.2 63.8L709.8000000000001 59.4L719.2 59.4L714.6 63.8Z" fill="#fafafa" stroke="#6a6a6a" stroke-width="1"/><path d="M714.6 63.8L719.2 59.4L719.2 68.39999999999999L714.6 72.8Z" fill="#fafafa" stroke="#6a6a6a" stroke-width="1"/><rect x="705.2" y="63.8" width="9.4" height="9" fill="#1b1d1f" stroke="#1b1d1f" stroke-width="1"/><path d="M731.2 63.8L735.8000000000001 59.4L745.2 59.4L740.6 63.8Z" fill="#1b1d1f" stroke="#1b1d1f" stroke-width="1"/><path d="M740.6 63.8L745.2 59.4L745.2 68.39999999999999L740.6 72.8Z" fill="#fafafa" stroke="#6a6a6a" stroke-width="1"/><rect x="731.2" y="63.8" width="9.4" height="9" fill="#fafafa" stroke="#6a6a6a" stroke-width="1"/><path d="M761.6 63.8L757.0 59.4L766.4 59.4L771.0 63.8Z" fill="#fafafa" stroke="#6a6a6a" stroke-width="1"/><path d="M761.6 63.8L757.0 59.4L757.0 68.39999999999999L761.6 72.8Z" fill="#1b1d1f" stroke="#1b1d1f" stroke-width="1"/><rect x="761.6" y="63.8" width="9.4" height="9" fill="#fafafa" stroke="#6a6a6a" stroke-width="1"/><path d="M783.2 63.8L787.8000000000001 59.4L797.2 59.4L792.6 63.8Z" fill="#fafafa" stroke="#6a6a6a" stroke-width="1"/><path d="M792.6 63.8L797.2 59.4L797.2 68.39999999999999L792.6 72.8Z" fill="#1b1d1f" stroke="#1b1d1f" stroke-width="1"/><rect x="783.2" y="63.8" width="9.4" height="9" fill="#fafafa" stroke="#6a6a6a" stroke-width="1"/></svg>
<div class="b" style="left:814px;top:54.5px;width:120px;height:23px;background:#fff;border:1px solid #7f7f7f;box-sizing:border-box;"></div>
<span class="t" style="left:820.9px;top:60.42px;font-size:12.5px;line-height:12.5px;transform:scaleX(0.9670);color:#111;">Просмотр мод...</span>
<svg class="b" style="left:916.0px;top:63.3px;" width="10" height="6" viewBox="0 0 10 6"><path d="M1 1 L5.0 5 L9 1" fill="none" stroke="#000" stroke-width="1.5" stroke-linecap="square"/></svg>
<div class="b" style="left:0px;top:102px;width:48px;height:48px;background:#1f2427;"></div>
<svg class="b" style="left:0px;top:102px;" width="48" height="48" viewBox="0 0 48 48"><path d="M10.8 33.2V14.8H15.6L17.6 17.6H30.4V20.4" fill="none" stroke="#fff" stroke-width="1.3"/><path d="M17.8 20.4H38L32 33.8H10.8Z" fill="#fff"/></svg>
<div class="b" style="left:0px;top:162px;width:48px;height:288px;background:#1f2427;"></div>
<div class="b" style="left:0px;top:162px;width:48px;height:48px;background:#45494c;"></div>
<svg class="b" style="left:0px;top:0px;" width="48" height="460" viewBox="0 0 48 460"><path d="M15.2 174.5L32.8 174.5L29.3 182L35.8 197.5L12.2 197.5L18.7 182Z" fill="none" stroke="#fff" stroke-width="1.3"/><path d="M12 187H21" stroke="#fff" stroke-width="1.4"/><path d="M20.2 183.6L25.2 187L20.2 190.4Z" fill="#fff"/><path d="M17.3 223.5L32.7 223.5L29.5 231L36.0 244.5L14.0 244.5L20.5 231Z" fill="none" stroke="#d0d0d0" stroke-width="1.3"/><path d="M14.5 230.6L22.9 230.6L21.2 235.6L25.4 245L12.0 245L16.2 235.6Z" fill="#fff"/><path d="M15.2 270.5L32.8 270.5L29.3 278L35.8 293.5L12.2 293.5L18.7 278Z" fill="none" stroke="#fff" stroke-width="1.3"/><ellipse cx="15.1" cy="279.2" rx="3.8" ry="3.9" fill="none" stroke="#fff" stroke-width="1.2"/><ellipse cx="32.9" cy="279.2" rx="3.8" ry="3.9" fill="none" stroke="#fff" stroke-width="1.2"/><path d="M15.4 283Q17.6 284.1 21 284.1" stroke="#fff" stroke-width="1.2" fill="none"/><path d="M20.2 280.7L25.1 284.1L20.2 287.5Z" fill="#fff"/><path d="M24 319.6H16L19.6 327L13.8 340H24" fill="none" stroke="#fff" stroke-width="1.3"/><path d="M24 319H32.2L29 327L34.6 340.6H24Z" fill="#fff"/><path d="M24 317V343" stroke="#ddd" stroke-width="1.4"/><path d="M22.0 363L36.6 363L33.8 370L38.3 383L20.3 383L24.8 370Z" fill="#fff"/><path d="M17.0 368.6L32.0 368.6L28.8 376L33.8 388.4L15.2 388.4L20.2 376Z" fill="#1f2427" stroke="#fff" stroke-width="1.3"/><path d="M11.3 374.5L26.3 374.5L23.3 381L28.6 393L9.0 393L14.3 381Z" fill="#fff" stroke="#1f2427" stroke-width="1.2"/><rect x="12.6" y="414.6" width="7.8" height="22.8" fill="none" stroke="#fff" stroke-width="1.3"/><path d="M20.4 422H28V430H36V438H20.4Z" fill="#fff"/><path d="M14.4 424.6L18.4 428.6M18.4 424.6L14.4 428.6" stroke="#fff" stroke-width="1"/></svg>
<div class="b" style="left:60px;top:161px;width:178px;height:145px;background:#fff;border:1px solid #c8c8c8;box-sizing:border-box;"></div>
<svg class="b" style="left:49px;top:174px;" width="13" height="24" viewBox="0 0 13 24"><path d="M12.4 1.6L1.6 12L12.4 22.4" fill="#fff" stroke="#c8c8c8" stroke-width="1"/><path d="M12 2.6V21.4" stroke="#fff" stroke-width="1.6"/></svg>
<span class="t" style="left:72px;top:181.43px;font-size:12.5px;line-height:12.5px;color:#e32a2f;">X</span>
<div class="b" style="left:85px;top:174px;width:120px;height:24px;background:#fff;border:1px solid #7f7f7f;box-sizing:border-box;"></div>
<span class="t" style="left:90.5px;top:181.43px;font-size:12.5px;line-height:12.5px;transform:scaleX(0.9790);color:#111;">-45.5909</span>
<span class="t" style="left:179.5px;top:181.43px;font-size:12.5px;line-height:12.5px;transform:scaleX(0.9032);color:#8c8c8c;">mm</span>
<span class="t" style="left:72px;top:211.43px;font-size:12.5px;line-height:12.5px;color:#4fd342;">Y</span>
<div class="b" style="left:85px;top:204px;width:120px;height:24px;background:#fff;border:1px solid #7f7f7f;box-sizing:border-box;"></div>
<span class="t" style="left:90.5px;top:211.43px;font-size:12.5px;line-height:12.5px;transform:scaleX(0.9791);color:#111;">-6.4089</span>
<span class="t" style="left:179.5px;top:211.43px;font-size:12.5px;line-height:12.5px;transform:scaleX(0.9032);color:#8c8c8c;">mm</span>
<span class="t" style="left:72px;top:241.43px;font-size:12.5px;line-height:12.5px;color:#1d1dba;">Z</span>
<div class="b" style="left:85px;top:234px;width:120px;height:24px;background:#fff;border:1px solid #7f7f7f;box-sizing:border-box;"></div>
<span class="t" style="left:90.5px;top:241.43px;font-size:12.5px;line-height:12.5px;transform:scaleX(0.8943);color:#111;">0</span>
<span class="t" style="left:179.5px;top:241.43px;font-size:12.5px;line-height:12.5px;transform:scaleX(0.9032);color:#8c8c8c;">mm</span>
<div class="b" style="left:84px;top:270px;width:24px;height:24px;background:#fff;border:1px solid #555;box-sizing:border-box;"></div>
<span class="t" style="left:112.4px;top:276.00px;font-size:13px;line-height:13px;transform:scaleX(0.9100);color:#1a1a1a;">Блокировка модели</span>
<div class="b" style="left:946px;top:42px;width:420px;height:686px;background:#fff;"></div>
<div class="b" style="left:946px;top:42px;width:420px;height:48px;background:#1f2427;"></div>
<span class="t" style="left:967.4px;top:60.40px;font-size:13px;line-height:13px;font-weight:bold;color:#fff;">Prusa i3</span>
<svg class="b" style="left:1343.1px;top:62.900000000000006px;" width="11" height="6.6" viewBox="0 0 11 6.6"><path d="M1 1 L5.5 5.6 L10 1" fill="none" stroke="#fff" stroke-width="1.5" stroke-linecap="square"/></svg>
<span class="t" style="left:967.4px;top:119.85px;font-size:12px;line-height:12px;transform:scaleX(0.9653);color:#111;">Материал</span>
<div class="b" style="left:1059px;top:113px;width:286px;height:24px;background:#fff;border:1px solid #7f7f7f;box-sizing:border-box;"></div>
<span class="t" style="left:1065.6px;top:119.85px;font-size:12px;line-height:12px;color:#111;">PLA</span>
<svg class="b" style="left:1322.6px;top:122.0px;" width="10" height="6" viewBox="0 0 10 6"><path d="M1 1 L5.0 5 L9 1" fill="none" stroke="#000" stroke-width="1.5" stroke-linecap="square"/></svg>
<span class="t" style="left:1194.2px;top:157.43px;font-size:12.5px;line-height:12.5px;transform:scaleX(0.9625);color:#2e9dd4;text-decoration:underline;">Проверить совместимость</span>
<div class="b" style="left:946px;top:185px;width:420px;height:6px;background:#f3f3f3;"></div>
<span class="t" style="left:967.4px;top:210.46px;font-size:16px;line-height:16px;font-weight:bold;transform:scaleX(0.9792);color:#0a0a0a;">Настройка печати</span>
<div class="b" style="left:1114px;top:244.5px;width:117px;height:23px;background:#fff;border:1px solid #7f7f7f;box-sizing:border-box;"></div>
<span class="t" style="left:1122.4px;top:250.85px;font-size:12px;line-height:12px;transform:scaleX(0.9870);color:#111;">Рекомендованн...</span>
<div class="b" style="left:1230px;top:244.5px;width:115.5px;height:23px;background:#fff;border:2px solid #1c9fd8;box-sizing:border-box;"></div>
<span class="t" style="left:1274.3px;top:250.85px;font-size:12px;line-height:12px;transform:scaleX(0.9815);color:#111;">Своя</span>
<span class="t" style="left:967.4px;top:292.45px;font-size:12px;line-height:12px;transform:scaleX(1.0085);color:#111;">Профиль:</span>
<div class="b" style="left:1114px;top:285.4px;width:231px;height:23.2px;background:#fff;border:1px solid #7f7f7f;box-sizing:border-box;"></div>
<span class="t" style="left:1120.3px;top:292.25px;font-size:12px;line-height:12px;transform:scaleX(0.9476);color:#111;">Normal</span>
<span class="t" style="left:1157.4px;top:292.25px;font-size:12px;line-height:12px;transform:scaleX(1.0282);color:#c4c4c4;"> - 0.15mm</span>
<svg class="b" style="left:1304px;top:289.6px;" width="14" height="14" viewBox="0 0 14 14"><path d="M7 0.6L8.9 5H13.4L9.8 8L11.2 12.8L7 10L2.8 12.8L4.2 8L0.6 5H5.1Z" fill="#666"/></svg>
<svg class="b" style="left:1322.6px;top:294.4px;" width="10" height="6" viewBox="0 0 10 6"><path d="M1 1 L5.0 5 L9 1" fill="none" stroke="#000" stroke-width="1.5" stroke-linecap="square"/></svg>
<div class="b" style="left:967px;top:326px;width:348px;height:23.6px;background:#fff;border:1px solid #7f7f7f;box-sizing:border-box;"></div>
<span class="t" style="left:972.1px;top:332.82px;font-size:12.5px;line-height:12.5px;transform:scaleX(0.9710);color:#111;">Поиск...</span>
<svg class="b" style="left:1328px;top:331.6px;" width="11" height="12" viewBox="0 0 11 12"><path d="M0 2H10.4M0 5.8H10.4M0 9.6H10.4" stroke="#222" stroke-width="1.7"/></svg>
<div class="b" style="left:946px;top:364px;width:420px;height:263px;overflow:hidden;">
<div class="b" style="left:-946px;top:-364px;width:1366px;height:768px;">
<span class="t" style="left:985.2px;top:360.55px;font-size:12px;line-height:12px;font-style:italic;transform:scaleX(1.0401);color:#111;">Скорость печати</span>
<svg class="b" style="left:1199.6px;top:357.2px;" width="16" height="16" viewBox="0 0 16 16"><path d="M3 6.8A5.5 5.5 0 1 1 8.8 14" fill="none" stroke="#7b7b7b" stroke-width="1.8"/><path d="M1.2 2.4L1.8 8.6L7 5.8Z" fill="#7b7b7b"/></svg>
<div class="b" style="left:1225px;top:352px;width:120px;height:24px;background:#fff;border:1px solid #7f7f7f;box-sizing:border-box;"></div>
<span class="t" style="left:1231px;top:360.55px;font-size:12px;line-height:12px;color:#111;">35</span>
<span class="t" style="left:1311px;top:360.55px;font-size:12px;line-height:12px;transform:scaleX(0.8907);color:#9a9a9a;">mm/s</span>
<div class="b" style="left:967px;top:379.3px;width:378px;height:25.5px;background:#f5f5f5;"></div>
<span class="t" style="left:1010.6px;top:386.99px;font-size:12.3px;line-height:12.3px;font-weight:bold;transform:scaleX(1.0276);color:#14181c;">Перемещение</span>
<svg class="b" style="left:1323.0px;top:388.90000000000003px;" width="10" height="6" viewBox="0 0 10 6"><path d="M1 1 L5.0 5 L9 1" fill="none" stroke="#000" stroke-width="1.5" stroke-linecap="square"/></svg>
<div class="b" style="left:967px;top:433.3px;width:378px;height:25.5px;background:#f5f5f5;"></div>
<span class="t" style="left:1010.6px;top:440.99px;font-size:12.3px;line-height:12.3px;font-weight:bold;transform:scaleX(1.0089);color:#14181c;">Охлаждение</span>
<svg class="b" style="left:1323.0px;top:442.90000000000003px;" width="10" height="6" viewBox="0 0 10 6"><path d="M1 1 L5.0 5 L9 1" fill="none" stroke="#000" stroke-width="1.5" stroke-linecap="square"/></svg>
<div class="b" style="left:967px;top:487.3px;width:378px;height:25.5px;background:#f5f5f5;"></div>
<span class="t" style="left:1010.6px;top:494.99px;font-size:12.3px;line-height:12.3px;font-weight:bold;transform:scaleX(0.9747);color:#14181c;">Поддержки</span>
<svg class="b" style="left:1323.0px;top:496.90000000000003px;" width="10" height="6" viewBox="0 0 10 6"><path d="M1 1 L5.0 5 L9 1" fill="none" stroke="#000" stroke-width="1.5" stroke-linecap="square"/></svg>
<div class="b" style="left:967px;top:541.3px;width:378px;height:25.5px;background:#f5f5f5;"></div>
<span class="t" style="left:1010.6px;top:548.99px;font-size:12.3px;line-height:12.3px;font-weight:bold;transform:scaleX(1.0603);color:#14181c;">Тип прилипания к столу</span>
<svg class="b" style="left:1323.0px;top:550.9px;" width="10" height="6" viewBox="0 0 10 6"><path d="M1 1 L5.0 5 L9 1" fill="none" stroke="#000" stroke-width="1.5" stroke-linecap="square"/></svg>
<div class="b" style="left:967px;top:595.3px;width:378px;height:25.5px;background:#f5f5f5;"></div>
<span class="t" style="left:1010.6px;top:602.99px;font-size:12.3px;line-height:12.3px;font-weight:bold;transform:scaleX(1.0277);color:#14181c;">Два экструдера</span>
<svg class="b" style="left:1323px;top:601.3px;" width="8" height="14" viewBox="0 0 8 14"><path d="M6.4 1.6L1.6 6.6L6.4 11.6" fill="none" stroke="#000" stroke-width="1.6"/></svg>
<svg class="b" style="left:0px;top:0px;pointer-events:none;" width="1366" height="768" viewBox="0 0 1366 768"><path d="M989 382.7 H997 V384.3 Q997 388.7 993 388.7 Q989 388.7 989 384.3Z" fill="#24282b"/><rect x="991.6" y="389.90000000000003" width="2.6" height="1.8" fill="#666"/><path d="M983.4 394.3H993.4M982.2 396.5H995.4M981 398.7H996.4" stroke="#666" stroke-width="1"/><g transform="translate(988.6,446.3)" fill="none" stroke="#24282b" stroke-width="1.5" stroke-linecap="round"><path d="M0.4 -1.6Q3.6 -3.6 2.4 -7.4" transform="rotate(0)"/><path d="M0.4 -1.6Q3.6 -3.6 2.4 -7.4" transform="rotate(45)"/><path d="M0.4 -1.6Q3.6 -3.6 2.4 -7.4" transform="rotate(90)"/><path d="M0.4 -1.6Q3.6 -3.6 2.4 -7.4" transform="rotate(135)"/><path d="M0.4 -1.6Q3.6 -3.6 2.4 -7.4" transform="rotate(180)"/><path d="M0.4 -1.6Q3.6 -3.6 2.4 -7.4" transform="rotate(225)"/><path d="M0.4 -1.6Q3.6 -3.6 2.4 -7.4" transform="rotate(270)"/><path d="M0.4 -1.6Q3.6 -3.6 2.4 -7.4" transform="rotate(315)"/></g><path d="M984.4 492.3H994L992.4 496.7L995.6 504.3H988" fill="none" stroke="#666" stroke-width="0.9"/><path d="M984.4 492.3L985.8 497.3" stroke="#666" stroke-width="0.9"/><path d="M981 497.90000000000003H985.6V502.3H990V506.7H981Z" fill="#24282b"/><path d="M982 555.3H995M982 557.3H995" stroke="#555" stroke-width="1.1"/><path d="M982.6 552.9Q988.5 555.6999999999999 994.4 552.9" fill="none" stroke="#555" stroke-width="0.9"/><path d="M988.5 546.3V550.3" stroke="#24282b" stroke-width="1"/><path d="M986.6 549.9H990.4L988.5 552.9Z" fill="#24282b"/><path d="M988.5 564.3V560.3" stroke="#24282b" stroke-width="1"/><path d="M986.6 561.6999999999999H990.4L988.5 558.9Z" fill="#24282b"/><path d="M988.6 601.9H984L986 606.3L982.4 615.6999999999999H988.6" fill="none" stroke="#666" stroke-width="1"/><path d="M988.6 601.3H993.4L991.6 606.3L995 616.3H988.6Z" fill="#24282b"/><path d="M988.6 599.6999999999999V617.9" stroke="#24282b" stroke-width="1"/></svg>
<svg class="b" style="left:0px;top:0px;pointer-events:none;" width="1366" height="768" viewBox="0 0 1366 768"><g transform="translate(1304,392)"><circle r="5.6" fill="#3f4f7c"/><rect x="-1.9" y="-8.2" width="3.8" height="4" rx="1" fill="#3f4f7c" transform="rotate(0)"/><rect x="-1.9" y="-8.2" width="3.8" height="4" rx="1" fill="#3f4f7c" transform="rotate(45)"/><rect x="-1.9" y="-8.2" width="3.8" height="4" rx="1" fill="#3f4f7c" transform="rotate(90)"/><rect x="-1.9" y="-8.2" width="3.8" height="4" rx="1" fill="#3f4f7c" transform="rotate(135)"/><rect x="-1.9" y="-8.2" width="3.8" height="4" rx="1" fill="#3f4f7c" transform="rotate(180)"/><rect x="-1.9" y="-8.2" width="3.8" height="4" rx="1" fill="#3f4f7c" transform="rotate(225)"/><rect x="-1.9" y="-8.2" width="3.8" height="4" rx="1" fill="#3f4f7c" transform="rotate(270)"/><rect x="-1.9" y="-8.2" width="3.8" height="4" rx="1" fill="#3f4f7c" transform="rotate(315)"/><circle r="2.7" fill="#f5f5f5"/></g></svg>
<span class="t" style="left:985.4px;top:414.05px;font-size:12px;line-height:12px;transform:scaleX(1.0081);color:#111;">Поднятие оси Z при откате</span>
<div class="b" style="left:1225px;top:407.3px;width:24px;height:24px;background:#fff;border:1px solid #7f7f7f;box-sizing:border-box;"></div>
<span class="t" style="left:985.4px;top:468.05px;font-size:12px;line-height:12px;font-style:italic;transform:scaleX(1.0325);color:#111;">Включить вентиляторы</span>
<svg class="b" style="left:1199.6px;top:464.7px;" width="16" height="16" viewBox="0 0 16 16"><path d="M3 6.8A5.5 5.5 0 1 1 8.8 14" fill="none" stroke="#7b7b7b" stroke-width="1.8"/><path d="M1.2 2.4L1.8 8.6L7 5.8Z" fill="#7b7b7b"/></svg>
<div class="b" style="left:1225px;top:461.3px;width:24px;height:24px;background:#fff;border:1px solid #7f7f7f;box-sizing:border-box;"></div>
<span class="t" style="left:985.4px;top:522.05px;font-size:12px;line-height:12px;color:#111;">Генерация поддержек</span>
<svg class="b" style="left:1199.6px;top:518.7px;" width="16" height="16" viewBox="0 0 16 16"><g transform="rotate(-45 8 8)" fill="none" stroke="#7b7b7b" stroke-width="1.4"><rect x="0.8" y="5.2" width="7" height="5.6" rx="2"/><rect x="8.2" y="5.2" width="7" height="5.6" rx="2"/><path d="M6 8H10"/></g></svg>
<div class="b" style="left:1225px;top:515.3px;width:24px;height:24px;background:#fff;border:1px solid #7f7f7f;box-sizing:border-box;"></div>
<span class="t" style="left:985.4px;top:576.05px;font-size:12px;line-height:12px;font-style:italic;transform:scaleX(1.0297);color:#111;">Тип прилипания к столу</span>
<svg class="b" style="left:1177.4px;top:572.7px;" width="16" height="16" viewBox="0 0 16 16"><g transform="rotate(-45 8 8)" fill="none" stroke="#7b7b7b" stroke-width="1.4"><rect x="0.8" y="5.2" width="7" height="5.6" rx="2"/><rect x="8.2" y="5.2" width="7" height="5.6" rx="2"/><path d="M6 8H10"/></g></svg>
<svg class="b" style="left:1199.6px;top:572.7px;" width="16" height="16" viewBox="0 0 16 16"><path d="M3 6.8A5.5 5.5 0 1 1 8.8 14" fill="none" stroke="#7b7b7b" stroke-width="1.8"/><path d="M1.2 2.4L1.8 8.6L7 5.8Z" fill="#7b7b7b"/></svg>
<div class="b" style="left:1225px;top:569.3px;width:120px;height:23.6px;background:#fff;border:1px solid #7f7f7f;box-sizing:border-box;"></div>
<span class="t" style="left:1230.7px;top:576.05px;font-size:12px;line-height:12px;transform:scaleX(0.9411);color:#111;">Юбка</span>
<svg class="b" style="left:1323.0px;top:578.3px;" width="10" height="6" viewBox="0 0 10 6"><path d="M1 1 L5.0 5 L9 1" fill="none" stroke="#000" stroke-width="1.5" stroke-linecap="square"/></svg>
</div></div>
<div class="b" style="left:1356.4px;top:541px;width:8.4px;height:80px;background:#1f2427;border-radius:4.2px;"></div>
<div class="b" style="left:946px;top:621px;width:420px;height:6px;background:#f3f3f3;"></div>
<span class="t" style="left:967.4px;top:646.29px;font-size:12.3px;line-height:12.3px;font-weight:bold;transform:scaleX(1.0286);color:#0a0a0a;">Готов к нарезке</span>
<div class="b" style="left:967px;top:662.6px;width:378px;height:4.8px;background:#f3f3f3;"></div>
<span class="t" style="left:967.4px;top:680.66px;font-size:16px;line-height:16px;font-weight:bold;transform:scaleX(0.9960);color:#0a0a0a;">00ч 00мин</span>
<span class="t" style="left:967.4px;top:699.65px;font-size:12px;line-height:12px;transform:scaleX(1.0470);color:#111;">0.00m / ~ 0g</span>
<div class="b" style="left:1236px;top:679px;width:109px;height:32px;background:#fff;border:1px solid #7f7f7f;box-sizing:border-box;"></div>
<span class="t" style="left:1257.2px;top:689.85px;font-size:12px;line-height:12px;transform:scaleX(0.9931);color:#111;">Подготовка</span>
<span class="t" style="left:769.5px;top:675.42px;font-size:12.5px;line-height:12.5px;font-weight:bold;transform:scaleX(1.0314);color:#2a2a2a;">PI3_Amazing Crift (1)</span>
<svg class="b" style="left:917px;top:672px;" width="16" height="16" viewBox="0 0 16 16"><path d="M1.4 14.6L2.6 10L10.4 2.2L13.8 5.6L6 13.4Z" fill="#222"/><path d="M11.4 1.4L12.6 0.4L15.6 3.4L14.6 4.6Z" fill="#222"/></svg>
<span class="t" style="left:798.6px;top:699.42px;font-size:12.5px;line-height:12.5px;font-weight:bold;transform:scaleX(1.0651);color:#2a2a2a;">50.0 x 50.0 x 8.0 мм</span>
<div class="b" style="left:0px;top:728px;width:1366px;height:40px;background:linear-gradient(90deg,#ad8e58 0px,#aa8b55 110px,#a08049 250px,#9f814c 330px,#8c6c3b 400px,#896a39 600px,#7c5d30 720px,#6d4e28 850px,#7e6136 940px,#9c8150 1020px,#b09764 1100px,#b59d6a 1160px,#ab915e 1260px,#a38857 1366px);"></div>
<div class="b" style="left:110.5px;top:729px;width:54px;height:38px;background:rgba(230,215,170,0.38);border:1px solid rgba(255,245,215,0.45);box-sizing:border-box;"></div>
<div class="b" style="left:165px;top:729px;width:4px;height:38px;background:rgba(230,215,170,0.38);border:1px solid rgba(255,245,215,0.45);box-sizing:border-box;"></div>
<div class="b" style="left:297px;top:729px;width:58px;height:38px;background:rgba(215,205,185,0.40);border:1px solid rgba(255,245,225,0.40);box-sizing:border-box;"></div>
<div class="b" style="left:544.6px;top:729px;width:59px;height:38px;background:rgba(215,210,200,0.55);border:1px solid rgba(255,250,240,0.75);box-sizing:border-box;"></div>
<svg class="b" style="left:0px;top:0px;pointer-events:none;" width="1366" height="768" viewBox="0 0 1366 768"><defs><radialGradient id="micg" cx="0.5" cy="0.3" r="0.7"><stop offset="0" stop-color="#b06cf8" stop-opacity="0.9"/><stop offset="1" stop-color="#8a48ea" stop-opacity="0.9"/></radialGradient></defs><path d="M11.8 738.4L23.6 736.6V746.6H11.8ZM25 736.4L38.6 734.4V746.6H25ZM11.8 748H23.6V758L11.8 756.2ZM25 748H38.6V760L25 758.2Z" fill="#fff"/><circle cx="76.8" cy="747.6" r="16" fill="#a259f3"/><circle cx="76.8" cy="747.6" r="16" fill="url(#micg)"/><rect x="74" y="738.6" width="5.6" height="11" rx="2.8" fill="#fff"/><path d="M71.4 746.6Q71.4 752.4 76.8 752.4Q82.2 752.4 82.2 746.6" fill="none" stroke="#fff" stroke-width="1.2"/><path d="M76.8 752.4V756" stroke="#fff" stroke-width="1.2"/><path d="M121.6 741H133L135 738H151.6V762H121.6Z" fill="#e8c565"/><path d="M121.6 744H151.6V763H121.6Z" fill="#f4dc8c"/><rect x="125.6" y="736.2" width="5" height="2.6" fill="#3aa04a"/><rect x="133.6" y="737.4" width="5" height="2.6" fill="#d84a38"/><rect x="140.6" y="740" width="5" height="2.6" fill="#3b78d8"/><path d="M126 763V753.6Q126 751.6 128 751.6H146Q148 751.6 148 753.6V763H142.4V757H131.6V763Z" fill="#5aa7dc" stroke="#2e78b4" stroke-width="0.8"/><ellipse cx="203" cy="747" rx="16.6" ry="7" fill="none" stroke="#f2c12e" stroke-width="2.6" transform="rotate(-32 203 747)"/><rect x="248.8" y="733" width="30" height="30.4" fill="#0e8a16"/><path d="M255.6 745H272.4L271 758.6H257Z" fill="#fff"/><path d="M259.6 745Q259.6 738.6 264 738.6Q268.4 738.6 268.4 745" fill="none" stroke="#fff" stroke-width="1.4"/><path d="M260 749.4L263.4 748.9V752H260ZM264.4 748.8L268 748.3V752H264.4ZM260 753H263.4V756.1L260 755.6ZM264.4 753H268V756.7L264.4 756.2Z" fill="#0e8a16"/><ellipse cx="326.2" cy="747.8" rx="11" ry="13.4" fill="none" stroke="#e2202c" stroke-width="7.6"/><path d="M387.8 733.6L396.6 757H379Z" fill="#f58a0b"/><path d="M384.4 742.4H391.2L393 747.2H382.6ZM381.4 750.4H394.2L395.6 754.2H380Z" fill="#f4f4f4"/><path d="M376.6 757H399L401 762.4H374.6Z" fill="#f07d05"/><circle cx="450" cy="748" r="15" fill="#e23a2e"/><path d="M450 748L437 755.5A15 15 0 0 1 437 740.5Z" fill="#e23a2e"/><path d="M450 748L437.01 740.5A15 15 0 0 0 450 763Z" fill="#2c9c4a" transform="rotate(0 450 748)"/><path d="M450 748L450 763A15 15 0 0 0 462.99 740.5Z" fill="#f7c72c"/><path d="M437.01 740.5A15 15 0 0 1 462.99 740.5Z" fill="#e23a2e"/><circle cx="450" cy="748" r="6.8" fill="#fff"/><circle cx="450" cy="748" r="5.4" fill="#4a8af4"/><circle cx="512" cy="749" r="14.4" fill="#ff9a1f"/><path d="M512 733Q520 737 523.6 742Q527.6 750 524 757Q519 764 511 763.4Q502 763 499 755Q497 749 500 743Q503 746 505 745Q507 738 512 733Z" fill="#ff5a2a"/><path d="M514 731Q522 735 525 743Q520 739 515 739Z" fill="#ffcb2e"/><circle cx="512.4" cy="750.4" r="7.6" fill="#7a3be0"/><path d="M499 744Q503 739 509 742Q505 746 507 750Q501 750 499 744Z" fill="#ffb52e"/><path d="M559.6 733H590V754.6L582.4 763H552V741.4Z" fill="#1b9fdf"/><path d="M582 742.6H573.6Q567.6 742.6 567.6 748.2Q567.6 753.8 573.6 753.8H582" fill="none" stroke="#fff" stroke-width="4.4"/><path d="M1154 752.2L1158.4 746.8L1162.8 752.2Z" fill="#fff"/><path d="M1176.4 741.4V756.4" stroke="#fff" stroke-width="1.6"/><path d="M1177.6 742Q1181 740.4 1184 742Q1186.6 743.4 1189.6 742V749.6Q1186.6 751 1184 749.6Q1181 748 1177.6 749.6Z" fill="#fff"/><circle cx="1186.6" cy="753" r="4.4" fill="#d8262c"/><path d="M1184.6 751L1188.6 755M1188.6 751L1184.6 755" stroke="#fff" stroke-width="1.3"/><path d="M1199.4 754.4V752.4H1201.4V754.4ZM1202.6 754.4V750.4H1204.8V754.4ZM1206 754.4V748.2H1208.2V754.4ZM1209.4 754.4V745.8H1211.6V754.4ZM1212.8 754.4V743.4H1214.6V754.4Z" fill="#fff"/><path d="M1223 746.4H1225.6L1229.6 742.4V756L1225.6 752H1223Z" fill="#fff"/><circle cx="1234" cy="752.4" r="4.2" fill="#fff" stroke="#d8262c" stroke-width="1.7"/><path d="M1231.2 749.6L1236.8 755.2" stroke="#d8262c" stroke-width="1.7"/></svg>
<span class="t" style="left:189.6px;top:728.65px;font-size:38px;line-height:38px;font-weight:bold;transform:scaleX(1.2299);color:#3aa9ee;font-family:'Liberation Sans',sans-serif;">e</span>
<span class="t" style="left:1254.2px;top:742.75px;font-size:12px;line-height:12px;transform:scaleX(0.9072);color:#fff;font-family:'Liberation Sans',sans-serif;">РУС</span>
<span class="t" style="left:1307.9px;top:734.15px;font-size:12px;line-height:12px;transform:scaleX(0.8558);color:#fff;font-family:'Liberation Sans',sans-serif;">14:15</span>
<span class="t" style="left:1293px;top:751.45px;font-size:12px;line-height:12px;transform:scaleX(0.8957);color:#fff;font-family:'Liberation Sans',sans-serif;">30.01.2020</span>
</body></html>
